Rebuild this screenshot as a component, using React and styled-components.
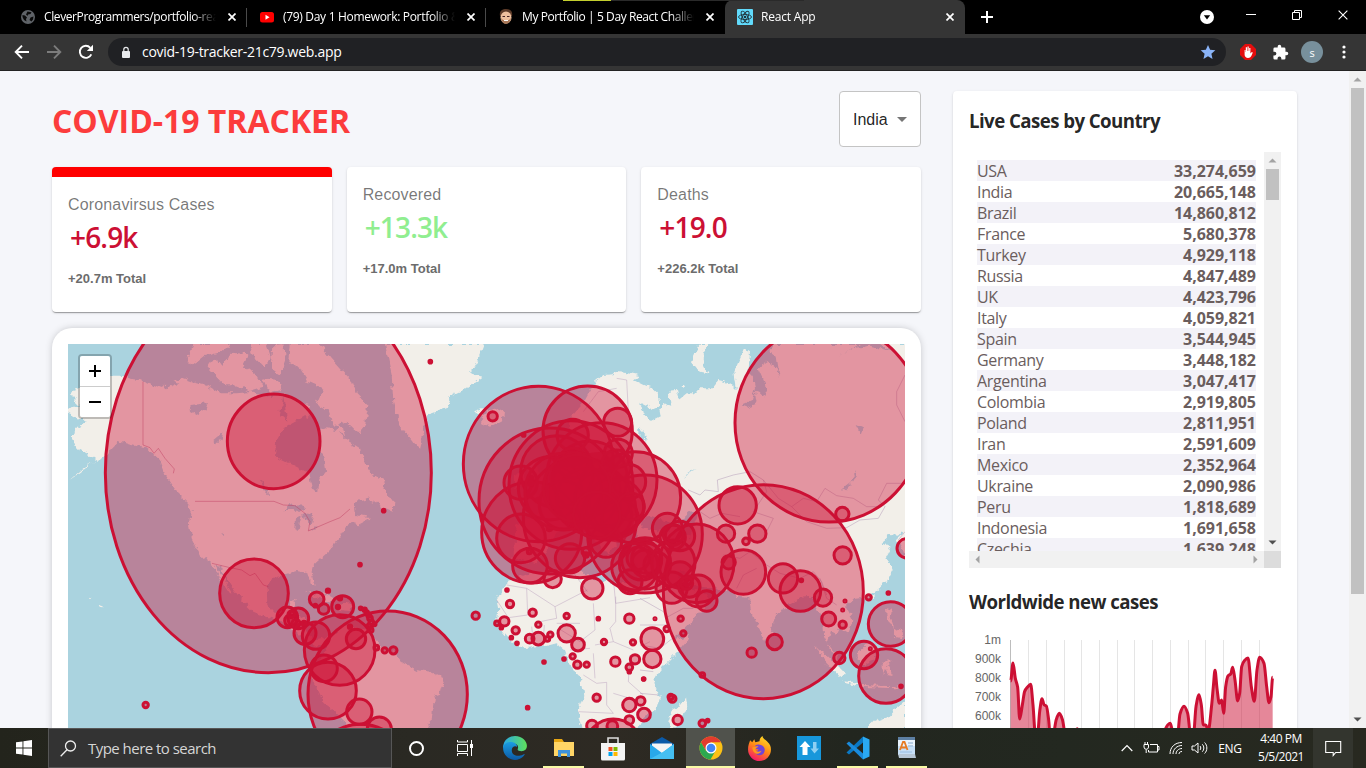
import React from "react";
import styled, { createGlobalStyle, css } from "styled-components";

const RED = "#cc1034";
const segoe = `"Segoe UI", "Open Sans", "Noto Sans", sans-serif`;
const arial = `"Liberation Sans", Arial, sans-serif`;

const Global = createGlobalStyle`
  * { box-sizing: border-box; }
  html, body { margin: 0; padding: 0; overflow: hidden; }
  body { font-family: ${segoe}; background: #f5f6fa; }
  svg { display: block; flex: none; }
`;

const Desktop = styled.div`
  width: 1366px;
  height: 768px;
  display: flex;
  flex-direction: column;
  overflow: hidden;
  position: relative;
`;

/* ---------- browser chrome ---------- */
const TabStrip = styled.div`
  height: 34px;
  flex: none;
  background: #000;
  display: flex;
  align-items: stretch;
  padding-left: 8px;
  color: #fff;
`;
const Tab = styled.div`
  width: 239px;
  flex: none;
  display: flex;
  align-items: center;
  padding: 0 7px 0 12px;
  gap: 8px;
  ${(p) =>
    p.$divided &&
    css`
      background: linear-gradient(#4a4a4a, #4a4a4a) right 0 top 8px / 1px 19px no-repeat;
    `}
  ${(p) =>
    p.$active &&
    css`
      width: 240px;
      background: #353535;
      border-radius: 8px 8px 0 0;
    `}
`;
const TabTitle = styled.span`
  flex: 1;
  font-size: 12px;
  line-height: 16px;
  letter-spacing: ${(p) => p.$track}px;
  white-space: nowrap;
  overflow: hidden;
  mask-image: linear-gradient(90deg, #000 86%, transparent 100%);
`;
const TabClose = styled.span`
  width: 16px;
  height: 16px;
  display: grid;
  place-items: center;
`;
const StripSpacer = styled.div`flex: 1;`;
const NewTab = styled.div`
  width: 44px;
  display: grid;
  place-items: center;
`;
const WindowButton = styled.div`
  width: ${(p) => p.$w || 46}px;
  display: grid;
  place-items: center;
  padding-bottom: ${(p) => p.$lift ?? 5}px;
`;
const TopEdge = styled.div`
  position: absolute;
  top: 0;
  left: 563px;
  width: 241px;
  height: 1px;
  background: linear-gradient(90deg, #c4cf2e 48px, #2a2a2a 48px);
`;
const Toolbar = styled.div`
  height: 37px;
  flex: none;
  background: #353535;
  border-bottom: 1px solid #232323;
  display: flex;
  align-items: center;
  padding-left: 6px;
`;
const ToolButton = styled.div`
  width: 32px;
  height: 32px;
  display: grid;
  place-items: center;
`;
const Omnibox = styled.div`
  width: 1118px;
  height: 28px;
  margin: 0 6px;
  border-radius: 14px;
  background: #202124;
  display: flex;
  align-items: center;
  padding: 0 10px 0 13px;
`;
const Url = styled.span`
  flex: 1;
  margin: -1px 0 0 11px;
  color: #fff;
  font-size: 14px;
  letter-spacing: -0.29px;
`;
const Avatar = styled.div`
  width: 22px;
  height: 22px;
  border-radius: 50%;
  background: #78909c;
  color: #fff;
  font: 11px ${segoe};
  display: grid;
  place-items: center;
`;

/* ---------- page ---------- */
const Viewport = styled.div`
  height: 657px;
  flex: none;
  display: flex;
  overflow: hidden;
  background: #f5f6fa;
`;
const Page = styled.main`
  width: 1349px;
  flex: none;
  padding: 20px 52px;
  display: flex;
  align-items: flex-start;
  gap: 32px;
`;
const Left = styled.section`
  width: 869px;
  flex: none;
`;
const Header = styled.header`
  height: 56px;
  display: flex;
  align-items: center;
  justify-content: space-between;
  margin-bottom: 20px;
`;
const Title = styled.h1`
  margin: 2px 0 0;
  color: #fc3c3c;
  font-size: 32px;
  line-height: 43px;
  font-weight: 700;
  letter-spacing: -0.03px;
  white-space: nowrap;
`;
const Select = styled.div`
  width: 82px;
  height: 56px;
  border: 1px solid #c4c4c4;
  border-radius: 4px;
  background: #fff;
  display: flex;
  align-items: center;
  gap: 9px;
  padding: 1px 0 0 13px;
  font: 16px ${arial};
  color: rgba(0, 0, 0, 0.87);
`;
const Caret = styled.i`
  border: 5px solid transparent;
  border-top-color: #757575;
  border-bottom: 0;
`;
const cardShadow = `0 2px 1px -1px rgba(0,0,0,.2), 0 1px 1px 0 rgba(0,0,0,.14), 0 1px 3px 0 rgba(0,0,0,.12)`;
const Stats = styled.div`
  display: grid;
  grid-template-columns: repeat(3, 1fr);
  gap: 15px;
`;
const StatCard = styled.article`
  height: 145px;
  background: #fff;
  border-radius: 4px;
  box-shadow: ${cardShadow};
  padding: 16px;
  overflow: hidden;
  border-top: ${(p) => (p.$selected ? "10px solid red" : "0")};
`;
const StatLabel = styled.p`
  margin: 0;
  font: 16px/24px ${arial};
  letter-spacing: 0.15px;
  color: rgba(0, 0, 0, 0.54);
`;
const StatValue = styled.h2`
  margin: 0 0 10px;
  padding-left: 2px;
  height: 40px;
  font-size: 28px;
  line-height: 40px;
  font-weight: 600;
  letter-spacing: -0.85px;
  color: ${(p) => (p.$good ? "lightgreen" : RED)};
`;
const StatTotal = styled.p`
  margin: 0;
  font: 700 13px/24px ${arial};
  color: #6c6c6c;
`;
const MapBox = styled.div`
  margin-top: 16px;
  height: 500px;
  padding: 16px;
  background: #fff;
  border-radius: 20px;
  box-shadow: 0 0 8px -2px rgba(0, 0, 0, 0.3);
`;
const MapCanvas = styled.div`
  position: relative;
  height: 468px;
  overflow: hidden;
  background: #aad3df;
`;
const ZoomControl = styled.div`
  position: absolute;
  left: 10px;
  top: 10px;
  width: 34px;
  border: 2px solid rgba(0, 0, 0, 0.22);
  border-radius: 4px;
  background-clip: padding-box;
`;
const ZoomButton = styled.div`
  height: ${(p) => (p.$last ? 30 : 31)}px;
  background: #fff;
  border-bottom: ${(p) => (p.$last ? "0" : "1px solid #ccc")};
  border-radius: ${(p) => (p.$last ? "0 0 2px 2px" : "2px 2px 0 0")};
  display: grid;
  place-items: center;
`;
const Side = styled.aside`
  width: 344px;
  height: 760px;
  flex: none;
  background: #fff;
  border-radius: 4px;
  box-shadow: ${cardShadow};
  padding: 16px;
`;
const SideTitle = styled.h3`
  margin: 0;
  height: 26px;
  line-height: 27px;
  font-size: 18.7px;
  font-weight: 700;
  letter-spacing: -0.57px;
  color: rgba(0, 0, 0, 0.87);
  white-space: nowrap;
`;
const TableBox = styled.div`
  margin: 19px 0 20px;
  width: 312px;
  height: 416px;
  display: grid;
  grid-template: 399px 17px / 295px 17px;
`;
const Rows = styled.div`
  overflow: hidden;
  padding: 8px 8px 0;
`;
const Row = styled.div`
  height: 21px;
  line-height: 23px;
  display: flex;
  justify-content: space-between;
  font-size: 16px;
  color: #6a5d5d;
  background: ${(p) => (p.$odd ? "#f3f2f8" : "#fff")};
`;
const Country = styled.span`letter-spacing: -0.33px;`;
const Count = styled.strong`
  font-weight: 700;
  letter-spacing: -0.02px;
`;
const Bar = styled.div`
  background: #f1f1f1;
  display: flex;
  flex-direction: ${(p) => (p.$h ? "row" : "column")};
  justify-content: space-between;
  align-items: center;
  width: ${(p) => (p.$h ? "auto" : "17px")};
`;
const Thumb = styled.div`
  width: 13px;
  height: ${(p) => p.$size}px;
  margin-bottom: auto;
  background: #c1c1c1;
`;
const Corner = styled.div`background: #dcdcdc;`;
const ChartBox = styled.div`padding-top: 16px;`;

/* ---------- taskbar ---------- */
const Taskbar = styled.footer`
  height: 40px;
  flex: none;
  display: flex;
  align-items: stretch;
  background: linear-gradient(90deg, #23241c 0, #2a2923 30%, #2e2a23 45%, #22261f 62%, #232820 78%, #282920 100%);
  color: #fff;
`;
const Slot = styled.div`
  width: ${(p) => p.$w || 49}px;
  flex: none;
  display: grid;
  place-items: center;
  ${(p) =>
    p.$lit &&
    css`
      background: #50524c;
    `}
  ${(p) =>
    p.$open &&
    css`
      box-shadow: inset 0 -2px #f8faa5;
      margin: 0 ${p.$lit ? 0 : 4}px;
      width: ${p.$lit ? 49 : 41}px;
    `}
`;
const Search = styled.div`
  width: 344px;
  flex: none;
  background: #333;
  border: 1px solid #565656;
  display: flex;
  align-items: center;
  gap: 11px;
  padding-left: 11px;
  color: #d6d6d6;
  font-size: 15px;
  letter-spacing: -0.53px;
`;
const Tray = styled.div`
  margin-left: auto;
  display: flex;
  align-items: center;
`;
const Lang = styled.span`
  width: 38px;
  text-align: center;
  font-size: 12px;
  letter-spacing: -0.3px;
`;
const Clock = styled.div`
  width: 64px;
  text-align: center;
  font-size: 12px;
  line-height: 18px;
  letter-spacing: -0.5px;
  white-space: nowrap;
  padding-bottom: 1px;
`;
const Notice = styled.div`
  width: 40px;
  height: 40px;
  display: grid;
  place-items: center;
  background: #33352e;
  margin-right: 13px;
`;

const Cross = ({ s = 8, w = 1.7, c = "#fff" }) => (
  <svg width={s} height={s} viewBox="0 0 8 8">
    <path d="M.5.5l7 7M7.5.5l-7 7" stroke={c} strokeWidth={(w * 8) / s} fill="none" />
  </svg>
);

const Arrow = ({ dir = "up", c = "#505050" }) => {
  const deg = { up: 0, right: 90, down: 180, left: 270 }[dir];
  return (
    <svg width="17" height="17" viewBox="0 0 17 17">
      <path d="M4.5 10.5h8l-4-4z" fill={c} transform={`rotate(${deg} 8.5 8.5)`} />
    </svg>
  );
};

const Globe = () => (
  <svg width="16" height="16" viewBox="0 0 16 16">
    <circle cx="8" cy="8" r="7" fill="#5f6368" />
    <path d="M2.500 6l2.500.5 2 2-1 1.500.5 2.500-2.500-1.500-1.500-3zM7.500 2.500l4 .8-1 1.700-2.500.5-.5 1.500-1.500-1.500zM10.500 8.500l3-1-.5 3-1.500 2-2-1.500z" fill="#0a0a0a" />
  </svg>
);
const YouTube = () => (
  <svg width="16" height="16" viewBox="0 0 16 16">
    <rect x="1" y="3" width="14" height="10.5" rx="2.5" fill="#f00" />
    <path d="M6.5 5.7v5l4-2.5z" fill="#fff" />
  </svg>
);
const Face = () => (
  <svg width="16" height="18" viewBox="0 0 16 18">
    <path d="M2 8C1 3 4 1 8 1s7 2 6 7z" fill="#5c3a28" />
    <ellipse cx="8" cy="9.5" rx="5.5" ry="6" fill="#eebf9d" />
    <path d="M3 10c1 8 9 8 10 0l-2 2H5z" fill="#a87859" />
    <path d="M4.5 8.5h2.500M9 8.5h2.500" stroke="#422" />
    <path d="M6 12.500h4" stroke="#fff" />
  </svg>
);
const ReactMark = () => (
  <svg width="16" height="16" viewBox="0 0 16 16">
    <rect width="16" height="16" rx="1" fill="#61dafb" />
    <g fill="none" stroke="#20343c" strokeWidth=".9">
      <ellipse cx="8" cy="8" rx="6.500" ry="2.500" />
      <ellipse cx="8" cy="8" rx="6.500" ry="2.500" transform="rotate(60 8 8)" />
      <ellipse cx="8" cy="8" rx="6.500" ry="2.500" transform="rotate(120 8 8)" />
    </g>
    <circle cx="8" cy="8" r="1.300" fill="#20343c" />
  </svg>
);

const tabs = [
  { icon: <Globe />, title: "CleverProgrammers/portfolio-rea", track: -0.39, divided: true },
  { icon: <YouTube />, title: "(79) Day 1 Homework: Portfolio &", track: -0.31, divided: true },
  { icon: <Face />, title: "My Portfolio | 5 Day React Challen", track: -0.4 },
  { icon: <ReactMark />, title: "React App", track: -0.2, active: true },
];

const Browser = () => (
  <>
    <TabStrip>
      {tabs.map((t) => (
        <Tab key={t.title} $divided={t.divided} $active={t.active}>
          {t.icon}
          <TabTitle $track={t.track}>{t.title}</TabTitle>
          <TabClose>
            <Cross s={8} />
          </TabClose>
        </Tab>
      ))}
      <NewTab>
        <svg width="12" height="12" viewBox="0 0 12 12">
          <path d="M6 0v12M0 6h12" stroke="#fff" strokeWidth="2" />
        </svg>
      </NewTab>
      <StripSpacer />
      <WindowButton $w={42} $lift={0}>
        <svg width="14" height="14" viewBox="0 0 14 14">
          <circle cx="7" cy="7" r="7" fill="#fff" />
          <path d="M3.800 5.300h6.400L7 9.500z" fill="#000" />
        </svg>
      </WindowButton>
      <WindowButton>
        <svg width="10" height="10" viewBox="0 0 10 10">
          <path d="M0 4.500h10" stroke="#fff" />
        </svg>
      </WindowButton>
      <WindowButton>
        <svg width="10" height="10" viewBox="0 0 10 10">
          <path d="M.5 2.500h7v7h-7zM2.500 2.500v-2h7v7h-2" stroke="#fff" fill="none" />
        </svg>
      </WindowButton>
      <WindowButton>
        <Cross s={10} w={1.1} />
      </WindowButton>
    </TabStrip>
    <Toolbar>
      <ToolButton>
        <svg width="16" height="16" viewBox="0 0 16 16">
          <path d="M15 8H2M8 1.700L1.700 8 8 14.300" fill="none" stroke="#fff" strokeWidth="1.900" />
        </svg>
      </ToolButton>
      <ToolButton>
        <svg width="16" height="16" viewBox="0 0 16 16">
          <path d="M1 8h13M8 1.700L14.300 8 8 14.300" fill="none" stroke="#7c7c7c" strokeWidth="1.900" />
        </svg>
      </ToolButton>
      <ToolButton>
        <svg width="16" height="16" viewBox="0 0 16 16">
          <path d="M13.300 10.300A6 6 0 1 1 12.300 3.800" fill="none" stroke="#fff" strokeWidth="1.900" />
          <path d="M15 .8v6.200H8.800z" fill="#fff" />
        </svg>
      </ToolButton>
      <Omnibox>
        <svg width="10" height="13" viewBox="0 0 10 13">
          <rect x="1" y="5" width="8" height="7" rx="1" fill="#e8eaed" />
          <path d="M2.800 5.500V3.600a2.200 2.200 0 0 1 4.400 0v1.900" stroke="#e8eaed" fill="none" strokeWidth="1.200" />
        </svg>
        <Url>covid-19-tracker-21c79.web.app</Url>
        <svg width="16" height="16" viewBox="0 0 24 24">
          <path d="M12 1.500l3.200 7.300 7.800.7-5.900 5.200 1.700 7.800L12 18.400l-6.800 4.100 1.700-7.800L1 9.500l7.800-.7z" fill="#8ab4f8" />
        </svg>
      </Omnibox>
      <ToolButton>
        <svg width="16" height="16" viewBox="0 0 16 16">
          <path d="M5 0h6l5 5v6l-5 5H5l-5-5V5z" fill="#e40d0d" />
          <path d="M4.600 6v4.500c0 2 1.500 3.500 3.400 3.500 2 0 3-1.200 3.800-3l1-2.500-1-.4-1.400 1.500V4H9.200v3h-.5V2.500H7.500V7H7V3.300H5.800V8h-.3V6z" fill="#fff" />
        </svg>
      </ToolButton>
      <ToolButton>
        <svg width="17" height="17" viewBox="0 0 24 24">
          <path fill="#fff" d="M20.500 11H19V7a2 2 0 0 0-2-2h-4V3.500a2.500 2.500 0 0 0-5 0V5H4a2 2 0 0 0-2 2v3.800h1.500a2.700 2.700 0 0 1 0 5.400H2V20a2 2 0 0 0 2 2h3.800v-1.500a2.700 2.700 0 0 1 5.400 0V22H17a2 2 0 0 0 2-2v-4h1.500a2.500 2.500 0 0 0 0-5z" />
        </svg>
      </ToolButton>
      <ToolButton>
        <Avatar>s</Avatar>
      </ToolButton>
      <ToolButton>
        <svg width="4" height="14" viewBox="0 0 4 14" fill="#fff">
          <circle cx="2" cy="2" r="1.600" />
          <circle cx="2" cy="7" r="1.600" />
          <circle cx="2" cy="12" r="1.600" />
        </svg>
      </ToolButton>
    </Toolbar>
    <TopEdge />
  </>
);

/* ---------- world map: drawn at triple scale in three side-by-side sections ---------- */
const WEST = "translate(-18 -19) scale(.33333)";
const MID = "translate(282 -19) scale(.33333)";
const EAST = "translate(572 -19) scale(.33333)";

const westLand = [
  "M62 198 90 188 110 160 185 152 215 152 240 162 270 165 300 178 328 190 350 175 395 158 430 170 470 180 510 205 560 205 610 200 650 215 700 208 725 215 740 235 775 240 785 262 745 285 700 310 678 350 675 395 710 412 745 430 775 445 785 490 805 498 808 465 828 440 825 400 805 370 812 345 808 315 830 310 860 315 890 345 930 370 945 410 975 455 1005 470 1000 490 1030 530 1028 560 1000 548 960 520 910 535 915 570 960 580 925 598 900 590 870 640 835 680 790 720 785 740 797 785 785 780 775 745 740 738 715 745 665 760 650 790 652 840 680 870 715 850 720 828 740 825 730 860 765 880 775 930 800 945 840 935 850 950 800 962 750 935 700 890 650 875 610 860 580 830 540 780 510 725 495 722 520 760 548 805 540 805 510 760 485 715 450 690 425 640 420 600 425 560 415 535 380 500 350 455 330 405 290 370 250 362 205 348 180 375 170 390 100 430 55 468 80 450 140 405 110 385 80 370 65 335 80 310 110 290 85 280 50 260 70 245 95 245 65 215Z",
  "M430 57 410 100 425 122 465 90 500 82 540 70 535 57Z",
  "M480 112 500 100 510 130 545 80 598 85 580 120 620 150 640 185 600 198 550 178 520 178 475 130Z",
  "M600 57 650 57 665 100 640 125 615 100Z",
  "M670 60 700 57 705 110 690 150 665 130Z",
  "M722 57 810 57 835 90 880 140 908 170 920 205 955 240 945 300 925 325 885 290 850 305 835 255 800 235 820 190 775 170 750 130 718 110Z",
  "M640 160 680 165 700 195 660 205Z",
  "M735 235 765 240 785 262 770 275 740 262Z",
  "M860 300 880 310 885 330 862 322Z",
  "M765 800 820 805 860 828 835 832 790 812Z",
  "M868 835 905 840 900 855 868 852Z",
  "M120 815 124 818 121 821ZM146 836 158 840 156 846 150 844Z",
];
const westWater = [
  "M335 165 360 160 385 175 350 190ZM418 240 475 235 470 250 440 270 420 258ZM490 345 520 320 515 345 500 355Z",
  "M700 555 735 535 765 550 750 562 730 555ZM735 580 755 570 745 615 733 610ZM760 565 790 570 782 600 768 595ZM778 615 805 600 800 608ZM632 460 645 480 655 512 640 495ZM517 620 527 626 522 630ZM700 210 712 290 690 270Z",
];
const midLand = [
  "M105 57 125 150 130 230 150 300 190 350 207 370 222 310 232 270 290 250 305 212 350 190 398 155 360 145 385 100 402 57Z",
  "M372 262 400 252 398 268 440 252 462 262 458 285 420 305 390 292 400 278Z",
  "M-60 935 -20 905 10 905 55 915 75 945 100 975 130 978 155 1010 200 1035 240 1040 275 1055 283 1075 255 1120 245 1180 230 1215 -12 1215 -15 1190 -40 1165 -80 1130 -115 1060 -125 1030 -95 1010 -75 990Z",
  "M470 770 540 745 700 740 720 760 790 775 870 780 900 810 960 900 975 945 1020 930 1015 945 980 985 930 1035 910 1070 930 1115 920 1150 870 1190 860 1215 695 1215 683 1160 700 1110 690 1060 660 1020 645 975 620 955 580 965 520 970 480 945 440 900 445 850 440 825 460 790Z",
  "M735 170 760 150 790 148 800 138 830 142 870 150 850 165 900 190 932 225 925 245 870 230 880 262 890 300 895 340 870 330 840 345 820 390 760 400 700 420 640 430 600 480 540 500 580 560 500 600 490 700 560 715 620 620 700 600 770 690 830 620 1000 620 1100 500 960 200 1000 420 800 480 700 360 660 340 660 280 700 235Z",
  "M530 430 550 400 575 460 590 500 530 515 550 470ZM495 450 525 440 525 480 495 490Z",
];
const eastLand = [
  "M0 178 30 190 62 225 55 245 35 250 0 232Z",
  "M0 300 5 262 28 290 62 272 58 250 95 235 85 200 108 198 115 225 140 205 165 205 178 190 215 190 235 165 262 172 290 192 283 140 312 70 330 82 325 140 340 160 400 57 795 57 795 615 770 632 750 630 725 652 752 665 740 690 758 735 740 770 700 805 680 818 640 822 618 845 640 885 625 925 600 910 590 930 570 920 560 950 590 990 600 1015 575 980 552 935 550 880 530 850 515 815 480 818 430 850 400 890 395 930 375 945 350 900 332 850 328 818 290 815 270 792 210 790 160 780 130 740 110 745 155 800 180 798 212 820 190 850 150 895 95 950 70 880 25 810 -20 700 0 600 -80 450Z",
  "M180 57 205 57 185 95 190 125 203 148 175 142 153 115Z",
  "M-2 180 35 185 62 215 60 240 35 248 0 230ZM122 180 138 180 132 193Z",
  "M525 962 560 990 590 1020 615 1050 600 1055 560 1015ZM610 1065 655 1075 650 1080 615 1072ZM650 988 685 950 712 962 700 1008 665 1020Z",
  "M738 850 755 855 752 880 762 905 742 890ZM765 905 780 915 785 940 765 935ZM728 1005 760 1008 740 1018 758 1050 745 1048 735 1030 728 1055ZM665 1080 790 1085 770 1090 670 1086Z",
  "M680 1215 700 1190 750 1172 770 1150 795 1130 795 1215Z",
  "M138 1115 142 1148 120 1195 98 1215 85 1190 98 1150 120 1140Z",
  "M770 640 795 620 795 700 785 670ZM690 820 710 810 705 822ZM765 62 795 70 795 95Z",
];
const eastWater = [
  "M375 65 410 95 420 160 410 130 385 110 355 130 375 175 378 215 345 200 350 235 320 247 302 240 335 225 345 190 335 140 345 110 365 100Z",
  "M648 435 650 455 620 492 600 497 635 470ZM650 300 672 310 665 330ZM130 465 145 440 170 435 145 445Z",
  "M110 590 150 560 180 555 165 590 150 640 130 620ZM20 570 90 590 90 620 0 610ZM600 90 660 57 720 57 760 80 690 62 640 70Z",
  "M470 825 510 830 520 860 480 850ZM-5 310 20 330 15 350 -5 340Z",
];

const borders = [
  [WEST, "M279 170V360L300 368 312 385 325 370 345 400 373 432 370 445M435 529H672L700 540 735 542 765 565 780 590 775 618 840 590 870 578 900 552M486 715 540 728 575 735 600 752 615 745 640 780 655 785", "#b05078"],
  [MID, "M470 780 530 790 615 845 712 795M530 790 533 870 475 878 440 825M615 845 620 880 570 890M668 740 712 800M788 740 797 835 900 818M730 835 735 915 690 950 625 910M797 815V890L780 910 790 950 735 960M790 950 850 975M700 1050 740 1075 770 1072 770 1140 790 1165 685 1160M870 900 960 900M880 960 900 950M730 985 735 1060M840 990 835 1070 880 1110M790 1105 840 1120M660 975 720 970M545 905 550 950M583 900 580 945M800 160 830 165 835 260M700 260 745 200 800 190M620 895 690 895", "#b59abb"],
  [EAST, "M145 495 180 510 195 495 235 500 232 465 280 450 330 440 370 465 415 520 455 545 490 520 530 530 555 490 590 512 640 520 680 545 720 545M370 465 380 500 340 560 400 580 380 620M455 545 500 590 560 610 620 608 660 585 715 580 735 545 715 525 740 475 790 475M180 560 210 580 245 565 300 575M250 690 300 700 330 680 380 720 420 745 480 760 520 740 545 770 560 810M290 790 310 750 350 730M540 760 560 820 590 840M795 150 770 200 770 240 795 290M795 620 775 645M75 880 130 850 160 850M70 860 0 820M0 960 60 970 110 930M0 1035 40 1040M0 1105 55 1110", "#a98fb1"],
];

const westCircles = [
  [655, 443, 489, 600], [671, 349, 139, 142], [612, 805, 103], [287, 1140, 8], [712, 877, 31], [745, 880, 31], [722, 887, 18], [738, 895, 12],
  [724, 868, 10], [765, 925, 33], [798, 932, 41], [834, 797, 5], [800, 823, 22], [821, 852, 16], [796, 842, 4], [878, 845, 33], [870, 820, 5], [864, 846, 5],
  [869, 975, 106], [834, 1097, 85], [822, 1030, 40], [762, 895, 6],
];
const midCircles = [
  [113, 1108, 239, 250], [18, 942, 29], [28, 1160, 38], [88, 1212, 36], [32, 1348, 150], [32, 850, 4], [44, 854, 5], [50, 862, 5], [56, 870, 6], [60, 880, 7],
  [64, 892, 7], [58, 902, 6], [74, 898, 4], [62, 915, 7], [0, 905, 5], [79, 968, 7], [104, 976, 8], [130, 976, 11],
  [428, 274, 14], [241, 110, 4], [101, 557, 4], [30, 719, 4], [565, 417, 225, 233], [713, 317, 134], [803, 292, 42], [663, 480, 186, 193], [600, 528, 213, 219],
  [545, 622, 150, 152], [690, 578, 170, 180], [755, 465, 166, 172], [855, 517, 137], [885, 627, 172, 177], [513, 640, 73], [540, 722, 52], [512, 473, 50],
  [521, 330, 4], [620, 440, 108], [600, 490, 95], [720, 460, 112], [640, 540, 72], [710, 520, 90], [760, 520, 85], [795, 545, 86], [770, 570, 75], [810, 580, 55],
  [668, 330, 47], [668, 415, 45], [805, 385, 42], [800, 420, 45], [835, 470, 52], [843, 545, 40], [768, 650, 47], [660, 700, 44], [608, 762, 26], [727, 790, 32],
  [543, 460, 6], [543, 475, 6], [565, 525, 5], [598, 610, 7], [538, 680, 6], [708, 680, 12], [708, 690, 7], [640, 500, 115], [680, 490, 100], [740, 570, 70],
  [471, 795, 4], [480, 837, 11], [377, 872, 11], [441, 895, 7], [463, 889, 14], [454, 908, 4], [497, 916, 11], [484, 938, 4], [501, 955, 4], [539, 941, 13],
  [565, 941, 19], [592, 942, 7], [601, 929, 8], [548, 863, 11], [565, 899, 8], [650, 873, 8], [650, 925, 26], [684, 959, 19], [745, 881, 4], [838, 881, 14],
  [762, 951, 8], [849, 952, 8], [855, 1003, 14], [796, 1010, 14], [838, 1027, 10], [838, 1040, 4], [881, 1062, 4], [668, 994, 8], [642, 1002, 4],
  [682, 1019, 11], [710, 1019, 8], [582, 1011, 4], [740, 1118, 11], [533, 1148, 4], [838, 1140, 20], [872, 1128, 13], [838, 1185, 13], [726, 1202, 16],
  [787, 1203, 16], [790, 1262, 82, 80], [840, 770, 36],
];
const eastCircles = [
  [567, 293, 282, 298], [370, 800, 300, 321], [170, 715, 112, 118], [15, 715, 77], [5, 705, 60], [20, 700, 45], [15, 715, 40], [50, 720, 38], [-5, 700, 34],
  [-15, 725, 70], [100, 715, 65, 70], [82, 610, 45], [120, 633, 44], [98, 637, 38], [100, 630, 30], [95, 788, 47], [120, 750, 40], [175, 798, 48], [200, 828, 31],
  [148, 785, 32], [140, 775, 18], [293, 541, 56], [258, 626, 26], [352, 626, 26], [318, 649, 10], [266, 712, 20], [310, 741, 67], [607, 567, 20],
  [608, 691, 26], [429, 760, 44], [481, 798, 61], [484, 766, 4], [549, 818, 26], [566, 882, 21], [615, 828, 3], [608, 855, 3], [608, 899, 11], [672, 990, 41],
  [598, 999, 17], [691, 971, 3], [738, 1053, 82], [752, 897, 67], [745, 804, 4], [686, 817, 8], [800, 670, 29], [783, 1084, 4], [404, 951, 23], [335, 983, 14],
  [122, 881, 8], [130, 925, 8], [80, 912, 8], [45, 881, 3], [37, 942, 34], [37, 1002, 26], [11, 1062, 3], [187, 1050, 7], [92, 1116, 8], [97, 1121, 11],
  [113, 1185, 14], [187, 1195, 10], [203, 1187, 4], [12, 1169, 19],
];

const Land = ({ at, land, water = [] }) => (
  <g transform={at}>
    <path d={land.join("")} fill="#f2efe9" />
    {water.length > 0 && <path d={water.join("")} fill="#aad3df" />}
  </g>
);
const Cases = ({ at, data }) => (
  <g transform={at} fill={RED} fillOpacity=".4" stroke={RED} strokeWidth="9">
    {data.map(([cx, cy, rx, ry], i) => (
      <ellipse key={i} cx={cx} cy={cy} rx={rx} ry={ry || rx} />
    ))}
  </g>
);

const WorldMap = () => (
  <MapCanvas>
    <svg width="837" height="468" viewBox="0 0 837 468">
      <defs>
        <filter id="coast" x="-10" y="-10" width="860" height="490" filterUnits="userSpaceOnUse">
          <feTurbulence type="fractalNoise" baseFrequency=".16" numOctaves="3" seed="4" />
          <feDisplacementMap in="SourceGraphic" scale="7" xChannelSelector="R" yChannelSelector="G" />
        </filter>
      </defs>
      <g filter="url(#coast)">
        <rect x="-10" y="-10" width="860" height="490" fill="#aad3df" />
        <Land at={MID} land={midLand} />
        <Land at={WEST} land={westLand} water={westWater} />
        <Land at={EAST} land={eastLand} water={eastWater} />
        <path d="M836 0h14v90h-14zM836 90h14v110h-14zM836 445h14v40h-14z" fill="#f2efe9" />
      </g>
      {borders.map(([at, d, c]) => (
        <path key={at} transform={at} d={d} fill="none" stroke={c} strokeWidth="2.200" opacity=".6" />
      ))}
      <Cases at={WEST} data={westCircles} />
      <Cases at={MID} data={midCircles} />
      <Cases at={EAST} data={eastCircles} />
      <path
        transform={MID}
        d="M630 400 660 375 715 385 800 375 835 410 842 470 860 530 850 600 820 655 750 645 700 620 640 590 600 540 600 450Z"
        fill={RED}
        opacity=".75"
      />
    </svg>
    <ZoomControl>
      <ZoomButton>
        <svg width="12" height="12" viewBox="0 0 12 12">
          <path d="M6 0v12M0 6h12" stroke="#000" strokeWidth="2" />
        </svg>
      </ZoomButton>
      <ZoomButton $last>
        <svg width="12" height="12" viewBox="0 0 12 12">
          <path d="M0 6h12" stroke="#000" strokeWidth="2" />
        </svg>
      </ZoomButton>
    </ZoomControl>
  </MapCanvas>
);

const stats = [
  { label: "Coronavirsus Cases", value: "+6.9k", total: "+20.7m Total", selected: true },
  { label: "Recovered", value: "+13.3k", total: "+17.0m Total", good: true },
  { label: "Deaths", value: "+19.0", total: "+226.2k Total" },
];

const countries = [
  ["USA", "33,274,659"], ["India", "20,665,148"], ["Brazil", "14,860,812"], ["France", "5,680,378"], ["Turkey", "4,929,118"],
  ["Russia", "4,847,489"], ["UK", "4,423,796"], ["Italy", "4,059,821"], ["Spain", "3,544,945"], ["Germany", "3,448,182"],
  ["Argentina", "3,047,417"], ["Colombia", "2,919,805"], ["Poland", "2,811,951"], ["Iran", "2,591,609"], ["Mexico", "2,352,964"],
  ["Ukraine", "2,090,986"], ["Peru", "1,818,689"], ["Indonesia", "1,691,658"], ["Czechia", "1,639,248"],
];

/* ---------- daily cases chart ---------- */
const series = [
  [212, 843], [219, 789], [226, 835], [233, 862], [239, 957], [247, 915], [254, 874], [262, 862], [272, 853], [279, 915], [286, 1000], [293, 1000], [299, 935],
  [306, 896], [312, 914], [319, 918], [326, 960], [333, 1040], [340, 1010], [349, 958], [358, 940], [367, 958], [376, 1010], [395, 1080], [405, 1000],
  [412, 986], [420, 1020], [440, 1100], [560, 1110], [650, 1060], [675, 990], [683, 975], [691, 970], [698, 1000], [705, 1040], [712, 1020], [720, 942], [732, 919],
  [743, 940], [751, 1000], [760, 1010], [768, 920], [777, 884], [784, 915], [790, 975], [797, 975], [805, 990], [815, 915], [820, 860], [825, 811], [831, 865],
  [838, 910], [845, 900], [851, 940], [857, 860], [864, 828], [872, 822], [878, 802], [885, 840], [893, 903], [899, 880], [905, 800], [913, 782], [924, 774],
  [934, 860], [943, 904], [951, 810], [959, 772], [972, 790], [980, 860], [987, 908], [993, 890], [998, 832],
];
const smooth = (pts) =>
  pts
    .map(([x, y], i) => {
      if (!i) return `M${x} ${y}`;
      const slope = (k) => {
        const a = pts[k - 1], b = pts[k], c = pts[k + 1];
        if (!a || !c) return 0;
        const l = (b[1] - a[1]) / (b[0] - a[0]), r = (c[1] - b[1]) / (c[0] - b[0]);
        return l * r <= 0 ? 0 : (2 * l * r) / (l + r);
      };
      const [px, py] = pts[i - 1];
      const h = (x - px) / 3;
      return `C${px + h} ${py + h * slope(i - 1)} ${x - h} ${y - h * slope(i)} ${x} ${y}`;
    })
    .join("");
const gridX = [265, 319, 373, 424, 478, 532, 583, 637, 691, 745, 796, 850, 904, 958];
const ticks = ["1m", "900k", "800k", "700k", "600k"];

const CasesChart = () => {
  const line = smooth(series);
  return (
    <svg width="312" height="140" viewBox="87 690 936 420">
      {gridX.map((x) => (
        <path key={x} d={`M${x + 0.5} 720V1110`} stroke="#e5e5e5" strokeWidth="3" />
      ))}
      <path d="M211.500 720V1110" stroke="#bdbdbd" strokeWidth="3" />
      <path d={`${line}V1110H212Z`} fill={RED} fillOpacity=".5" />
      <path d={line} fill="none" stroke={RED} strokeWidth="9" />
      {ticks.map((t, i) => (
        <text key={t} x="183" y={732 + i * 57} textAnchor="end" fontSize="36" fontFamily={arial} fill="#666">
          {t}
        </text>
      ))}
    </svg>
  );
};

/* ---------- taskbar icons ---------- */
const Edge = () => (
  <svg width="26" height="26" viewBox="0 0 24 24">
    <defs>
      <linearGradient id="edgeTop" x1="0" x2="1">
        <stop offset="0" stopColor="#28a8e8" />
        <stop offset="1" stopColor="#5fe05a" />
      </linearGradient>
      <linearGradient id="edgeLow" x1="0" y1="0" x2="0" y2="1">
        <stop offset="0" stopColor="#1b9de2" />
        <stop offset="1" stopColor="#0c59a4" />
      </linearGradient>
    </defs>
    <path d="M1 12C1 5 6 1 12 1c7 0 11 5 11 9 0 3-2 5-5 5-2 0-4-.6-3.500-2 .8-1.700.5-5-3.500-5C5 8 1 12 1 12z" fill="url(#edgeTop)" />
    <path d="M1 12c0-3 3-5.500 7-5.500 3.500 0 6 2 6 4.500-2-1.500-5 0-5 3 0 4 4 6 8 5 2-.5 3.500-1.500 4-1.500.5 0-2.500 5.500-9 5.500C6 23 1 18 1 12z" fill="url(#edgeLow)" />
  </svg>
);
const Folder = () => (
  <svg width="22" height="22" viewBox="0 0 22 22">
    <path d="M1 2h8l2 3h10v14H1z" fill="#e8a713" />
    <path d="M1 5h20v14H1z" fill="#ffd566" />
    <path d="M5 20v-7h12v7h-3v-3.500H8V20z" fill="#3f93dc" />
  </svg>
);
const Store = () => (
  <svg width="24" height="25" viewBox="0 0 24 25">
    <path d="M7 7V2h10v5" fill="none" stroke="#ddd" strokeWidth="1.600" />
    <path d="M0 7h24v16a1.500 1.500 0 0 1-1.500 1.500h-21A1.500 1.500 0 0 1 0 23z" fill="#f4f4f4" />
    <path d="M7.500 11h4v4h-4z" fill="#f25022" />
    <path d="M12.500 11h4v4h-4z" fill="#7fba00" />
    <path d="M7.500 16h4v4h-4z" fill="#00a4ef" />
    <path d="M12.500 16h4v4h-4z" fill="#ffb900" />
  </svg>
);
const Mail = () => (
  <svg width="24" height="24" viewBox="0 0 24 24">
    <path d="M0 8l12-7 12 7v3H0z" fill="#0b5aa8" />
    <path d="M2 7.500h20V18H2z" fill="#f5f5f5" />
    <path d="M0 8l12 9L24 8v15H0z" fill="#28a8ea" />
    <path d="M0 23L13 16l11-8v15z" fill="#45bff2" />
  </svg>
);
const Chrome = () => (
  <svg width="24" height="24" viewBox="0 0 24 24">
    <circle cx="12" cy="12" r="11.500" fill="#fbc116" />
    <path d="M2 6.300A11.500 11.500 0 0 1 22 6.300H12L7 15z" fill="#e33b2e" />
    <path d="M2 6.300A11.500 11.500 0 0 0 11.500 23.500l5-8.700-9.500.200z" fill="#2da94f" />
    <circle cx="12" cy="12" r="5.500" fill="#fff" />
    <circle cx="12" cy="12" r="4.300" fill="#4285f4" />
  </svg>
);
const Firefox = () => (
  <svg width="25" height="25" viewBox="0 0 24 24">
    <defs>
      <linearGradient id="fox" x1=".8" y1="0" x2=".3" y2="1">
        <stop offset="0" stopColor="#ffe226" />
        <stop offset=".5" stopColor="#ff8a16" />
        <stop offset="1" stopColor="#f5156c" />
      </linearGradient>
    </defs>
    <path d="M3 4l2 2 2-3 1 3 4-1c0-2 1-4 3-5 0 3 3 3 5 6 2 2 3 4 3 7a11 11 0 0 1-22 0c0-4 1-6 2-9z" fill="url(#fox)" />
    <path d="M8 9c3-2 9 0 9 4a5 5 0 0 1-10 1c2 1 4 0 4-1l-3-1z" fill="#7044d6" />
    <path d="M5 11c2 0 3-2 6-1-1 1-3 1-3 3 1 3 5 2 6 1-1 4-8 5-9-3z" fill="#ff9a1c" />
  </svg>
);
const Transfer = () => (
  <svg width="24" height="24" viewBox="0 0 24 24">
    <path d="M0 0h24v24H0z" fill="#1797db" />
    <path d="M8 5l5.500 6h-3v8H5.500v-8h-3z" fill="#fff" />
    <path d="M17.500 17.500l-4-5h2.500V6h3.500v6.500H22z" fill="#8fd0f3" />
  </svg>
);
const Code = () => (
  <svg width="24" height="24" viewBox="0 0 24 24">
    <path d="M17 .5l6.500 3v17l-6.500 3z" fill="#2aa9f2" />
    <path d="M17 .5v6L3 18.500.500 16.500z" fill="#0a78c4" />
    <path d="M17 23.500v-6L3 5.500.500 7.500z" fill="#1a8bdc" />
  </svg>
);
const WordPad = () => (
  <svg width="20" height="22" viewBox="0 0 20 22">
    <path d="M1 1h17v17H1z" fill="#e9f3fc" />
    <path d="M1 0h17v3H1z" fill="#5d7fa3" />
    <path d="M11 6h5M11 9h5M3 15h12" stroke="#86a9cd" />
    <path d="M1 9h17v8H1z" fill="#a9cdf0" opacity=".55" />
    <path d="M3 13l3-8h1.500l3 8M4.500 10.500H9" stroke="#e77b22" strokeWidth="1.800" fill="none" />
    <path d="M1 17h17l1 4H2z" fill="#b7c7d6" />
  </svg>
);

const apps = [
  {
    icon: (
      <svg width="17" height="17" viewBox="0 0 17 17">
        <circle cx="8.500" cy="8.500" r="6.500" fill="none" stroke="#fff" strokeWidth="2" />
      </svg>
    ),
  },
  {
    icon: (
      <svg width="18" height="16" viewBox="0 0 18 16">
        <path d="M.5 4.500h10v7H.5zM.5 0v2h10V0M.5 16v-2.500h10V16M14.500 0v16" fill="none" stroke="#fff" />
        <path d="M13 4h3v4h-3z" fill="#fff" />
      </svg>
    ),
  },
  { icon: <Edge /> },
  { icon: <Folder />, open: true },
  { icon: <Store /> },
  { icon: <Mail /> },
  { icon: <Chrome />, open: true, lit: true },
  { icon: <Firefox /> },
  { icon: <Transfer /> },
  { icon: <Code />, open: true },
  { icon: <WordPad />, open: true },
];

const WindowsBar = () => (
  <Taskbar>
    <Slot $w={48}>
      <svg width="16" height="16" viewBox="0 0 16 16" fill="#fff">
        <path d="M0 2.300l6.500-.9v6.100H0zM7.400 1.200L16 0v7.500H7.400zM0 8.400h6.500v6.200L0 13.700zM7.400 8.400H16V16l-8.600-1.200z" />
      </svg>
    </Slot>
    <Search>
      <svg width="17" height="17" viewBox="0 0 17 17" fill="none" stroke="#eee" strokeWidth="1.300">
        <circle cx="10.500" cy="6" r="5" />
        <path d="M7 9.800L.7 16.300" />
      </svg>
      Type here to search
    </Search>
    {apps.map((a, i) => (
      <Slot key={i} $open={a.open} $lit={a.lit}>
        {a.icon}
      </Slot>
    ))}
    <Tray>
      <Slot $w={24}>
        <svg width="12" height="8" viewBox="0 0 12 8">
          <path d="M.7 7L6 1.500 11.300 7" fill="none" stroke="#fff" strokeWidth="1.200" />
        </svg>
      </Slot>
      <Slot $w={25}>
        <svg width="17" height="14" viewBox="0 0 17 14" fill="none" stroke="#fff">
          <path d="M7 3.500h7.500v7.500h-9V9M14.500 5.500H16v3.500h-1.500M1 3.500h4.500v2.500a2 2 0 0 1-4.500 0zM2 3.500V1M4.500 3.500V1M3.200 8.500V12" />
        </svg>
      </Slot>
      <Slot $w={24}>
        <svg width="14" height="14" viewBox="0 0 14 14" fill="none" stroke="#fff">
          <path d="M1 13C1 6 6 1.500 13 1.500M4 13c0-5 4-8.500 9-8.500M7 13c0-3 2.500-5.500 6-5.500M10 13c0-1.500 1-2.500 3-2.500" />
        </svg>
      </Slot>
      <Slot $w={23}>
        <svg width="17" height="14" viewBox="0 0 17 14" fill="none" stroke="#fff">
          <path d="M1 5h2.500L7 2v10L3.500 9H1zM9 5c1 1 1 3 0 4M11.300 3.300c2 2 2 5.400 0 7.400M13.600 1.500c3 3 3 8 0 11" />
        </svg>
      </Slot>
      <Lang>ENG</Lang>
      <Clock>
        4:40 PM
        <br />
        5/5/2021
      </Clock>
      <Notice>
        <svg width="17" height="17" viewBox="0 0 17 17">
          <path d="M.7 1.500h15v11h-5l-2.500 3v-3H.7z" fill="none" stroke="#fff" strokeWidth="1.100" />
        </svg>
      </Notice>
    </Tray>
  </Taskbar>
);

export default function App() {
  return (
    <Desktop>
      <Global />
      <Browser />
      <Viewport>
        <Page>
          <Left>
            <Header>
              <Title>COVID-19 TRACKER</Title>
              <Select>
                India <Caret />
              </Select>
            </Header>
            <Stats>
              {stats.map((s) => (
                <StatCard key={s.label} $selected={s.selected}>
                  <StatLabel>{s.label}</StatLabel>
                  <StatValue $good={s.good}>{s.value}</StatValue>
                  <StatTotal>{s.total}</StatTotal>
                </StatCard>
              ))}
            </Stats>
            <MapBox>
              <WorldMap />
            </MapBox>
          </Left>
          <Side>
            <SideTitle>Live Cases by Country</SideTitle>
            <TableBox>
              <Rows>
                {countries.map(([name, n], i) => (
                  <Row key={name} $odd={i % 2 === 0}>
                    <Country>{name}</Country>
                    <Count>{n}</Count>
                  </Row>
                ))}
              </Rows>
              <Bar>
                <Arrow dir="up" c="#a3a3a3" />
                <Thumb $size={31} />
                <Arrow dir="down" />
              </Bar>
              <Bar $h>
                <Arrow dir="left" c="#a3a3a3" />
                <Arrow dir="right" c="#a3a3a3" />
              </Bar>
              <Corner />
            </TableBox>
            <SideTitle>Worldwide new cases</SideTitle>
            <ChartBox>
              <CasesChart />
            </ChartBox>
          </Side>
        </Page>
        <Bar>
          <Arrow dir="up" c="#a3a3a3" />
          <Thumb $size={506} />
          <Arrow dir="down" />
        </Bar>
      </Viewport>
      <WindowsBar />
    </Desktop>
  );
}
